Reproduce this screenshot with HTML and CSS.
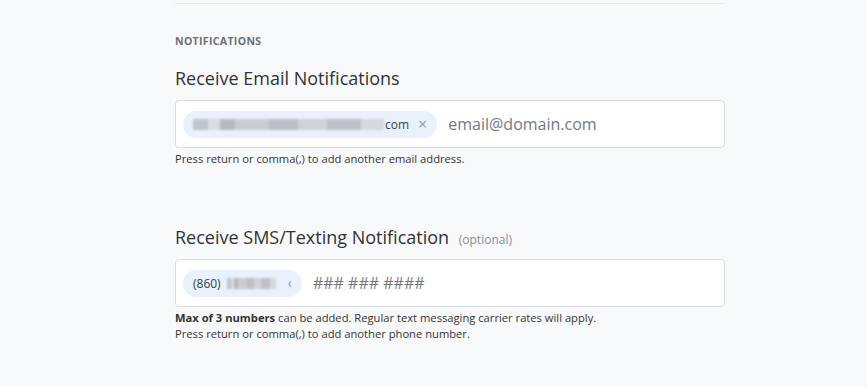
FILE: index.html
```html
<!DOCTYPE html>
<html lang="en">
<head>
    <meta charset="UTF-8">
    <meta name="viewport" content="width=device-width, initial-scale=1.0">
    <title>Notifications</title>
    <link rel="stylesheet" href="styles.css">
</head>
<body>
    <div class="panel">
        <div class="divider"></div>

        <h4 class="section-title">Notifications</h4>

        <div class="field">
            <label class="field-label">Receive Email Notifications</label>
            <div class="tag-input">
                <span class="chip">
                    <span class="redacted redacted-email"></span>
                    <span class="chip-text">com</span>
                    <span class="chip-remove">&times;</span>
                </span>
                <span class="placeholder">email@domain.com</span>
            </div>
            <p class="hint">Press return or comma(,) to add another email address.</p>
        </div>

        <div class="field field-sms">
            <label class="field-label">Receive SMS/Texting Notification <span class="optional">(optional)</span></label>
            <div class="tag-input">
                <span class="chip">
                    <span class="chip-text">(860)</span>
                    <span class="redacted redacted-phone"></span>
                    <span class="chip-remove chip-arrow">&lsaquo;</span>
                </span>
                <span class="placeholder">### ### ####</span>
            </div>
            <p class="hint"><strong>Max of 3 numbers</strong> can be added. Regular text messaging carrier rates will apply.<br>Press return or comma(,) to add another phone number.</p>
        </div>
    </div>
</body>
</html>
```

FILE: styles.css
```css
body {
    margin: 0;
    background-color: #f8f9fb;
    font-family: "Open Sans", Arial, sans-serif;
    color: #333;
}
.panel {
    width: 550px;
    margin-left: 175px;
    padding-top: 3px;
}
.divider {
    height: 1px;
    background-color: #e6e8eb;
}
.section-title {
    margin: 30px 0 0;
    font-size: 10.5px;
    font-weight: 700;
    text-transform: uppercase;
    color: #6b6f75;
    letter-spacing: 0.35px;
    line-height: 14px;
}
.field {
    margin-top: 18px;
}
.field-sms {
    margin-top: 58px;
}
.field-label {
    display: block;
    height: 24px;
    font-size: 18px;
    line-height: 24px;
    color: #333;
    margin-bottom: 10px;
}
.optional {
    font-size: 12px;
    line-height: 1;
    color: #8a8e94;
    margin-left: 5px;
}
.tag-input {
    display: flex;
    align-items: center;
    gap: 11px;
    height: 46px;
    padding: 0 7px;
    background: #fff;
    border: 1px solid #d9dce0;
    border-radius: 4px;
}
.chip {
    display: inline-flex;
    align-items: center;
    height: 27px;
    padding: 0 10px;
    border-radius: 14px;
    background-color: #e8f1fc;
    font-size: 12px;
    color: #3a3d41;
}
.redacted {
    display: inline-block;
    height: 11px;
    background: linear-gradient(90deg, #c2c4c9 0 8%, #dadce0 8% 14%, #b8babf 14% 22%, #cbcdd1 22% 40%, #bdbfc4 40% 55%, #d0d2d6 55% 70%, #bfc1c6 70% 88%, #d6d8dc 88%);
    filter: blur(1px);
}
.redacted-email {
    width: 191px;
    margin-right: 1px;
}
.redacted-phone {
    width: 49px;
    margin-left: 6px;
}
.chip-remove {
    margin-left: 9px;
    font-size: 16px;
    color: #979ba1;
    line-height: 1;
}
.chip-arrow {
    margin-left: 12px;
    font-size: 14px;
}
.placeholder {
    font-size: 16px;
    color: #74787e;
}
.hint {
    margin: 3px 0 0;
    font-size: 11.2px;
    line-height: 16px;
    color: #333;
}
.hint strong {
    font-weight: 700;
}
```
